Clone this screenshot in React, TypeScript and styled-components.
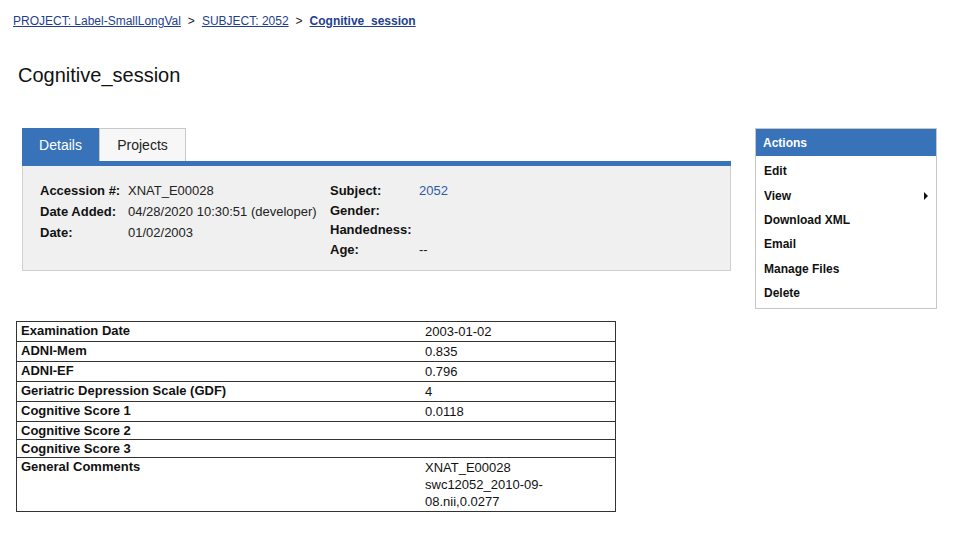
import React from "react";
import styled, { createGlobalStyle } from "styled-components";

const Global = createGlobalStyle`
  html, body { margin: 0; padding: 0; background: #fff; }
  body { font-family: "Liberation Sans", Arial, sans-serif; color: #111; }
`;

const Page = styled.div`
  width: 977px;
  height: 545px;
  box-sizing: border-box;
  padding: 13px 0 0 0;
  overflow: hidden;
`;

const Crumbs = styled.nav`
  display: flex;
  align-items: center;
  gap: 7px;
  padding-left: 13px;
  font-size: 12px;
  line-height: 16px;
`;

const Crumb = styled.a<{ $current?: boolean }>`
  color: #233f8c;
  text-decoration: underline;
  font-weight: ${(p) => (p.$current ? 700 : 400)};
`;

const Sep = styled.span`
  color: #222;
  font-size: 12px;
`;

const Title = styled.h1`
  margin: 0;
  padding: 35px 0 0 18px;
  font-size: 20px;
  line-height: 22px;
  font-weight: 400;
  color: #111;
`;

const MainRow = styled.div`
  display: flex;
  align-items: flex-start;
  padding: 42px 0 0 22px;
  gap: 24px;
`;

const TabBox = styled.div`
  width: 709px;
`;

const TabBar = styled.div`
  display: flex;
  align-items: flex-end;
  border-bottom: 5px solid #3872b8;
  height: 33px;
`;

const Tab = styled.div<{ $active?: boolean }>`
  box-sizing: border-box;
  height: 33px;
  display: flex;
  align-items: center;
  justify-content: center;
  font-size: 14px;
  width: ${(p) => (p.$active ? "77px" : "87px")};
  background: ${(p) => (p.$active ? "#3872b8" : "#f7f7f7")};
  color: ${(p) => (p.$active ? "#fff" : "#222")};
  border: 1px solid ${(p) => (p.$active ? "#3872b8" : "#c9c9c9")};
  border-bottom: none;
`;

const Panel = styled.div`
  background: #f0f0f0;
  border: 1px solid #cfcfcf;
  border-top: none;
  height: 105px;
  box-sizing: border-box;
  display: flex;
  padding: 17px 0 0 17px;
`;

const InfoTable = styled.div<{ $labelW: number; $rowH: number; $width: number }>`
  display: grid;
  grid-template-columns: ${(p) => p.$labelW}px auto;
  grid-auto-rows: ${(p) => p.$rowH}px;
  width: ${(p) => p.$width}px;
  font-size: 13px;
  line-height: 15px;
`;

const InfoLabel = styled.div`
  font-weight: 700;
  color: #111;
`;

const InfoValue = styled.div<{ $link?: boolean }>`
  color: ${(p) => (p.$link ? "#2d5aa6" : "#222")};
  white-space: nowrap;
`;

const Actions = styled.div`
  width: 182px;
  box-sizing: border-box;
  border: 1px solid #c6c6c6;
  padding-bottom: 3px;
`;

const ActionsHeader = styled.div`
  background: #3872b8;
  color: #fff;
  font-weight: 700;
  font-size: 12px;
  height: 27px;
  display: flex;
  align-items: center;
  padding-left: 7px;
`;

const ActionList = styled.ul`
  list-style: none;
  margin: 0;
  padding: 3px 0 0 0;
`;

const ActionItem = styled.li`
  display: flex;
  align-items: center;
  justify-content: space-between;
  height: 24.4px;
  padding: 0 8px 0 8px;
  font-size: 12px;
  font-weight: 700;
  color: #111;
`;

const Arrow = styled.span`
  width: 0;
  height: 0;
  border-top: 4px solid transparent;
  border-bottom: 4px solid transparent;
  border-left: 4px solid #111;
`;

const DataTable = styled.table`
  margin: 12px 0 0 16px;
  width: 600px;
  border-collapse: collapse;
  border: 1px solid #333;
  font-size: 13px;
`;

const Row = styled.tr`
  border-bottom: 1px solid #333;
`;

const LabelCell = styled.td`
  width: 396px;
  padding: 1px 4px;
  font-weight: 700;
  line-height: 15px;
  vertical-align: top;
`;

const ValueCell = styled.td`
  padding: 1px 4px;
  line-height: 17px;
  vertical-align: top;
  color: #111;
`;

const rows: [string, string[]][] = [
  ["Examination Date", ["2003-01-02"]],
  ["ADNI-Mem", ["0.835"]],
  ["ADNI-EF", ["0.796"]],
  ["Geriatric Depression Scale (GDF)", ["4"]],
  ["Cognitive Score 1", ["0.0118"]],
  ["Cognitive Score 2", []],
  ["Cognitive Score 3", []],
  ["General Comments", ["XNAT_E00028", "swc12052_2010-09-", "08.nii,0.0277"]],
];

export default function App() {
  return (
    <Page>
      <Global />
      <Crumbs>
        <Crumb href="#">PROJECT: Label-SmallLongVal</Crumb>
        <Sep>&gt;</Sep>
        <Crumb href="#">SUBJECT: 2052</Crumb>
        <Sep>&gt;</Sep>
        <Crumb href="#" $current>
          Cognitive_session
        </Crumb>
      </Crumbs>
      <Title>Cognitive_session</Title>
      <MainRow>
        <TabBox>
          <TabBar>
            <Tab $active>Details</Tab>
            <Tab>Projects</Tab>
          </TabBar>
          <Panel>
            <InfoTable $labelW={88} $rowH={21} $width={290}>
              <InfoLabel>Accession #:</InfoLabel>
              <InfoValue>XNAT_E00028</InfoValue>
              <InfoLabel>Date Added:</InfoLabel>
              <InfoValue>04/28/2020 10:30:51 (developer)</InfoValue>
              <InfoLabel>Date:</InfoLabel>
              <InfoValue>01/02/2003</InfoValue>
            </InfoTable>
            <InfoTable $labelW={89} $rowH={19.7} $width={200}>
              <InfoLabel>Subject:</InfoLabel>
              <InfoValue $link>2052</InfoValue>
              <InfoLabel>Gender:</InfoLabel>
              <InfoValue />
              <InfoLabel>Handedness:</InfoLabel>
              <InfoValue />
              <InfoLabel>Age:</InfoLabel>
              <InfoValue>--</InfoValue>
            </InfoTable>
          </Panel>
        </TabBox>
        <Actions>
          <ActionsHeader>Actions</ActionsHeader>
          <ActionList>
            <ActionItem>Edit</ActionItem>
            <ActionItem>
              View <Arrow />
            </ActionItem>
            <ActionItem>Download XML</ActionItem>
            <ActionItem>Email</ActionItem>
            <ActionItem>Manage Files</ActionItem>
            <ActionItem>Delete</ActionItem>
          </ActionList>
        </Actions>
      </MainRow>
      <DataTable>
        <tbody>
          {rows.map(([label, vals]) => (
            <Row key={label}>
              <LabelCell>{label}</LabelCell>
              <ValueCell>
                {vals.map((v, i) => (
                  <div key={i}>{v}</div>
                ))}
              </ValueCell>
            </Row>
          ))}
        </tbody>
      </DataTable>
    </Page>
  );
}
